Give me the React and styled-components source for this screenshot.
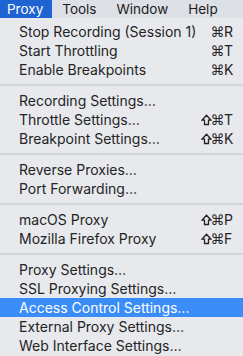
import styled, { createGlobalStyle } from "styled-components";

const GlobalStyle = createGlobalStyle`
    html, body { margin: 0; padding: 0; }
    body {
        width: 243px; height: 356px; overflow: hidden;
        background: #e7e9ed;
        font-family: Inter, "Liberation Sans", sans-serif;
        -webkit-font-smoothing: antialiased;
    }
`;

const menu_bar = ["Proxy", "Tools", "Window", "Help"];

const menu_groups = [
    [
        { label: "Stop Recording (Session 1)", key: "R" },
        { label: "Start Throttling", key: "T" },
        { label: "Enable Breakpoints", key: "K" },
    ],
    [
        { label: "Recording Settings…" },
        { label: "Throttle Settings…", key: "T", shift: true },
        { label: "Breakpoint Settings…", key: "K", shift: true },
    ],
    [
        { label: "Reverse Proxies…" },
        { label: "Port Forwarding…" },
    ],
    [
        { label: "macOS Proxy", key: "P", shift: true },
        { label: "Mozilla Firefox Proxy", key: "F", shift: true },
    ],
    [
        { label: "Proxy Settings…" },
        { label: "SSL Proxying Settings…" },
        { label: "Access Control Settings…", active: true },
        { label: "External Proxy Settings…" },
        { label: "Web Interface Settings…" },
    ],
];

function ShiftIcon(){
    return (
        <svg width="11" height="12" viewBox="0 0 11 12">
            <path
            d="M5.5 1.2 L10 6.2 H7.5 V10.5 H3.5 V6.2 H1 Z"
            fill="none" stroke="currentColor" strokeWidth="1.3" strokeLinejoin="miter"
            />
        </svg>
    )
}

export default function App(){
    return (
        <Screen>
            <GlobalStyle />
            <MenuBar>
                {menu_bar.map((name, i) => (
                    <MenuBarItem key={name} $active={i === 0}>{name}</MenuBarItem>
                ))}
            </MenuBar>
            <Menu>
                {menu_groups.map((group, gi) => (
                    <div key={gi}>
                        {gi > 0 && <Separator />}
                        {group.map((item) => (
                            <MenuItem key={item.label} $active={item.active}>
                                <span>{item.label}</span>
                                {item.key && (
                                    <Shortcut>
                                        {item.shift && <Modifier><ShiftIcon /></Modifier>}
                                        <Modifier>⌘</Modifier>
                                        <KeyLetter>{item.key}</KeyLetter>
                                    </Shortcut>
                                )}
                            </MenuItem>
                        ))}
                    </div>
                ))}
            </Menu>
        </Screen>
    )
}

// styled-comp

const Screen = styled.div`
    width: 243px; height: 356px;
    display: flex; flex-direction: column;
`;
const MenuBar = styled.div`
    height: 18px;
    display: flex; align-items: stretch;
    background: #dde0e7;
    font-size: 13.5px;
    color: #1c1c1c;
`;
const MenuBarItem = styled.div`
    display: flex; align-items: center;
    padding: 0 10px;
    &:first-child { padding: 0 9px 0 7px; }
    background: ${({$active}) => $active ? "#1d63d2" : "transparent"};
    color: ${({$active}) => $active ? "#ffffff" : "#1c1c1c"};
`;
const Menu = styled.div`
    padding-top: 4px;
    background: #e7e9ed;
    flex: 1;
`;
const MenuItem = styled.div`
    height: 19px;
    display: flex; align-items: center; justify-content: space-between;
    padding: 0 8px 0 19px;
    font-size: 14px;
    color: ${({$active}) => $active ? "#ffffff" : "#242424"};
    background: ${({$active}) => $active ? "#3a8cf8" : "transparent"};
`;
const Shortcut = styled.span`
    display: flex; align-items: center;
`;
const Modifier = styled.span`
    width: 11px;
    display: flex; justify-content: center; align-items: center;
    font-family: "DejaVu Sans", sans-serif;
    font-size: 14px;
    line-height: 1;
`;
const KeyLetter = styled.span`
    width: 11px;
    padding-left: 1px;
`;
const Separator = styled.div`
    height: 2px;
    margin: 5px 0;
    background: #d3d5da;
`;
